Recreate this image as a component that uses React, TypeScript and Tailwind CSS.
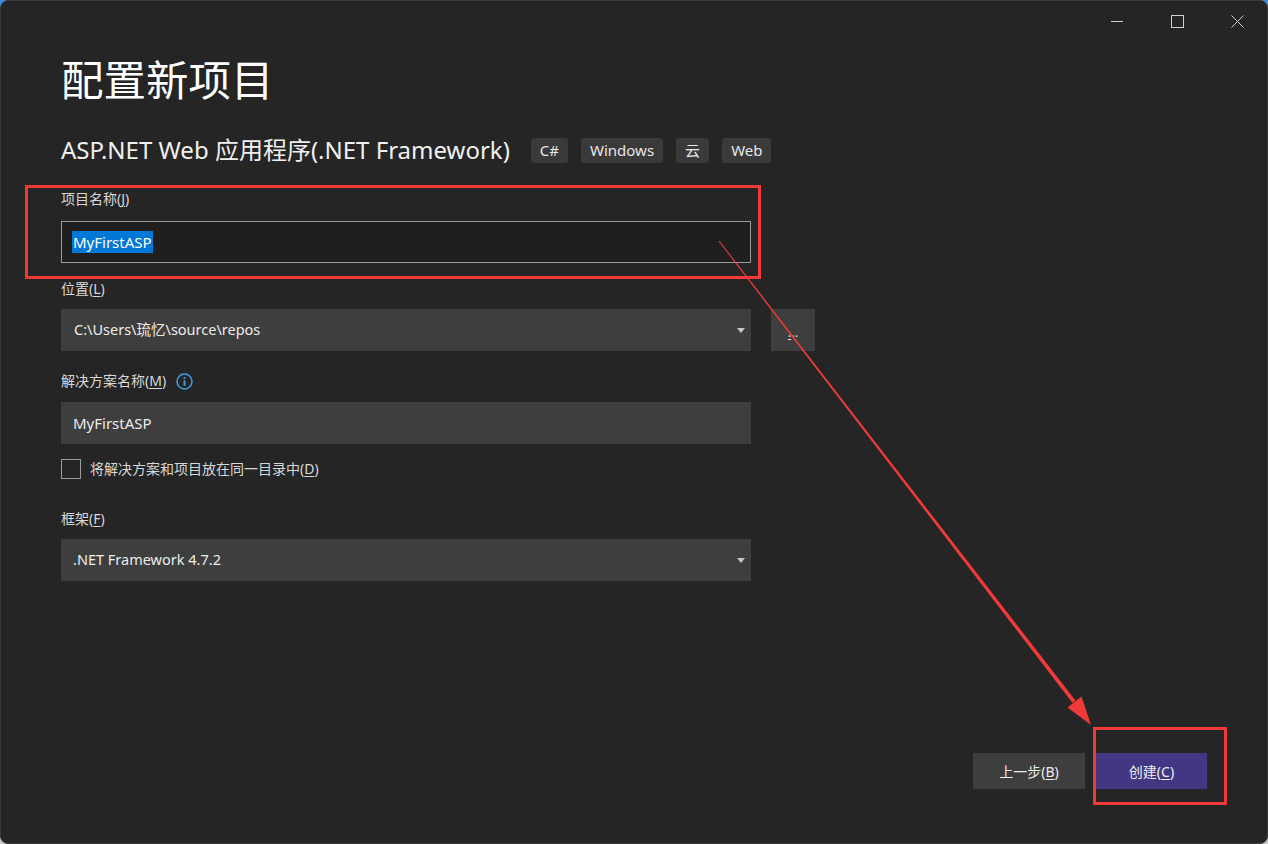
import React from 'react';

const font = { fontFamily: '"Noto Sans", "Noto Sans CJK SC", sans-serif' };

const Tag = ({ children }: { children: React.ReactNode }) => (
  <span className="h-[25px] px-[9px] flex items-center rounded-[3px] bg-[#3a3a3a] text-[15px] text-[#e6e6e6]">
    {children}
  </span>
);

const Label = ({ text, hot, rest = ')' }: { text: string; hot: string; rest?: string }) => (
  <div className="h-[20px] flex items-center text-[14px] text-[#d8d8d8] leading-none">
    {text}(<span className="underline underline-offset-2">{hot}</span>{rest}
  </div>
);

const Caret = () => (
  <svg width="8" height="5" viewBox="0 0 8 5" className="ml-auto mr-[6px]">
    <path d="M0 0 L8 0 L4 5 Z" fill="#c8c8c8" />
  </svg>
);

export default function App() {
  return (
    <div className="w-[1268px] h-[844px] bg-gradient-to-b from-[#3a8fe0] to-[#c9c9c9]" style={font}>
      <div className="relative w-full h-full bg-[#252525] rounded-[8px] border border-[#3a3a3a] flex flex-col overflow-hidden">
        {/* title bar */}
        <div className="h-[40px] flex justify-end">
          <button className="w-[60px] h-[40px] flex items-center justify-center">
            <svg width="12" height="12" viewBox="0 0 12 12">
              <path d="M0 6.5 H12" stroke="#d0d0d0" strokeWidth="1" />
            </svg>
          </button>
          <button className="w-[60px] h-[40px] flex items-center justify-center">
            <svg width="13" height="13" viewBox="0 0 13 13">
              <rect x="0.5" y="0.5" width="12" height="12" fill="none" stroke="#d0d0d0" strokeWidth="1" />
            </svg>
          </button>
          <button className="w-[60px] h-[40px] flex items-center justify-center">
            <svg width="13" height="13" viewBox="0 0 13 13">
              <path d="M0.5 0.5 L12.5 12.5 M12.5 0.5 L0.5 12.5" stroke="#d0d0d0" strokeWidth="1" />
            </svg>
          </button>
        </div>

        <div className="flex flex-col px-[60px]">
          <h1 className="mt-[15px] h-[48px] leading-[48px] text-[42.5px] text-white font-normal">配置新项目</h1>

          <div className="mt-[30px] h-[32px] flex items-center gap-[13px]">
            <span className="text-[24px] text-[#f0f0f0] mr-[8px]">ASP.NET Web 应用程序(.NET Framework)</span>
            <Tag>C#</Tag>
            <Tag>Windows</Tag>
            <Tag>云</Tag>
            <Tag>Web</Tag>
          </div>

          <div className="mt-[23px]">
            <Label text="项目名称" hot="J" />
          </div>
          <div className="mt-[12px] w-[690px] h-[42px] border border-[#9c9c9c] bg-[#1f1f1f] flex items-center px-[10px]">
            <span className="bg-[#0078d7] text-white text-[15px] leading-[22px] px-[1px]">MyFirstASP</span>
          </div>

          <div className="mt-[16px]">
            <Label text="位置" hot="L" />
          </div>
          <div className="mt-[10px] flex gap-[20px]">
            <div className="w-[690px] h-[42px] bg-[#3e3e3e] flex items-center pl-[13px]">
              <span className="text-[14.5px] text-[#ececec]">C:\Users\琉忆\source\repos</span>
              <Caret />
            </div>
            <div className="w-[44px] h-[42px] bg-[#3e3e3e] flex items-end justify-center pb-[12px] text-[13px] leading-none text-[#e0e0e0]">
              <span className="underline underline-offset-2">.</span>..
            </div>
          </div>

          <div className="mt-[20px] flex items-center gap-[10px]">
            <Label text="解决方案名称" hot="M" />
            <svg width="17" height="17" viewBox="0 0 17 17">
              <circle cx="8.5" cy="8.5" r="7.5" fill="none" stroke="#3ea0e0" strokeWidth="1.5" />
              <circle cx="8.5" cy="5" r="1.1" fill="#3ea0e0" />
              <rect x="7.6" y="7.2" width="1.8" height="5.6" fill="#3ea0e0" />
            </svg>
          </div>
          <div className="mt-[11px] w-[690px] h-[42px] bg-[#3e3e3e] flex items-center pl-[12px]">
            <span className="text-[15px] text-[#ececec]">MyFirstASP</span>
          </div>

          <div className="mt-[15px] flex items-center gap-[9px]">
            <div className="w-[20px] h-[20px] border border-[#9c9c9c]" />
            <Label text="将解决方案和项目放在同一目录中" hot="D" />
          </div>

          <div className="mt-[30px]">
            <Label text="框架" hot="F" />
          </div>
          <div className="mt-[10px] w-[690px] h-[42px] bg-[#3e3e3e] flex items-center pl-[12px]">
            <span className="text-[14.5px] text-[#ececec]">.NET Framework 4.7.2</span>
            <Caret />
          </div>
        </div>

        <div className="flex-1" />

        <div className="flex justify-end gap-[11px] pr-[60px] pb-[54px]">
          <button className="w-[112px] h-[36px] bg-[#3e3e3e] text-[14px] text-[#ececec]">
            上一步(<span className="underline underline-offset-2">B</span>)
          </button>
          <button className="w-[111px] h-[36px] bg-[#433683] text-[14px] text-[#f0f0f0]">
            创建(<span className="underline underline-offset-2">C</span>)
          </button>
        </div>

        {/* red annotations */}
        <svg className="absolute left-[-1px] top-[-1px] pointer-events-none" width="1268" height="844" viewBox="0 0 1268 844">
          <rect x="26.5" y="186.5" width="733" height="91" fill="none" stroke="#f03a3a" strokeWidth="3" />
          <rect x="1094.5" y="728.5" width="131" height="75" fill="none" stroke="#f03a3a" strokeWidth="3" />
          <polygon points="719.4,240.7 718.6,241.3 1072.5,703 1075.5,700.6" fill="#f03a3a" />
          <polygon points="1091,725 1067.5,707.5 1081.5,696.5" fill="#f03a3a" />
        </svg>
      </div>
    </div>
  );
}
